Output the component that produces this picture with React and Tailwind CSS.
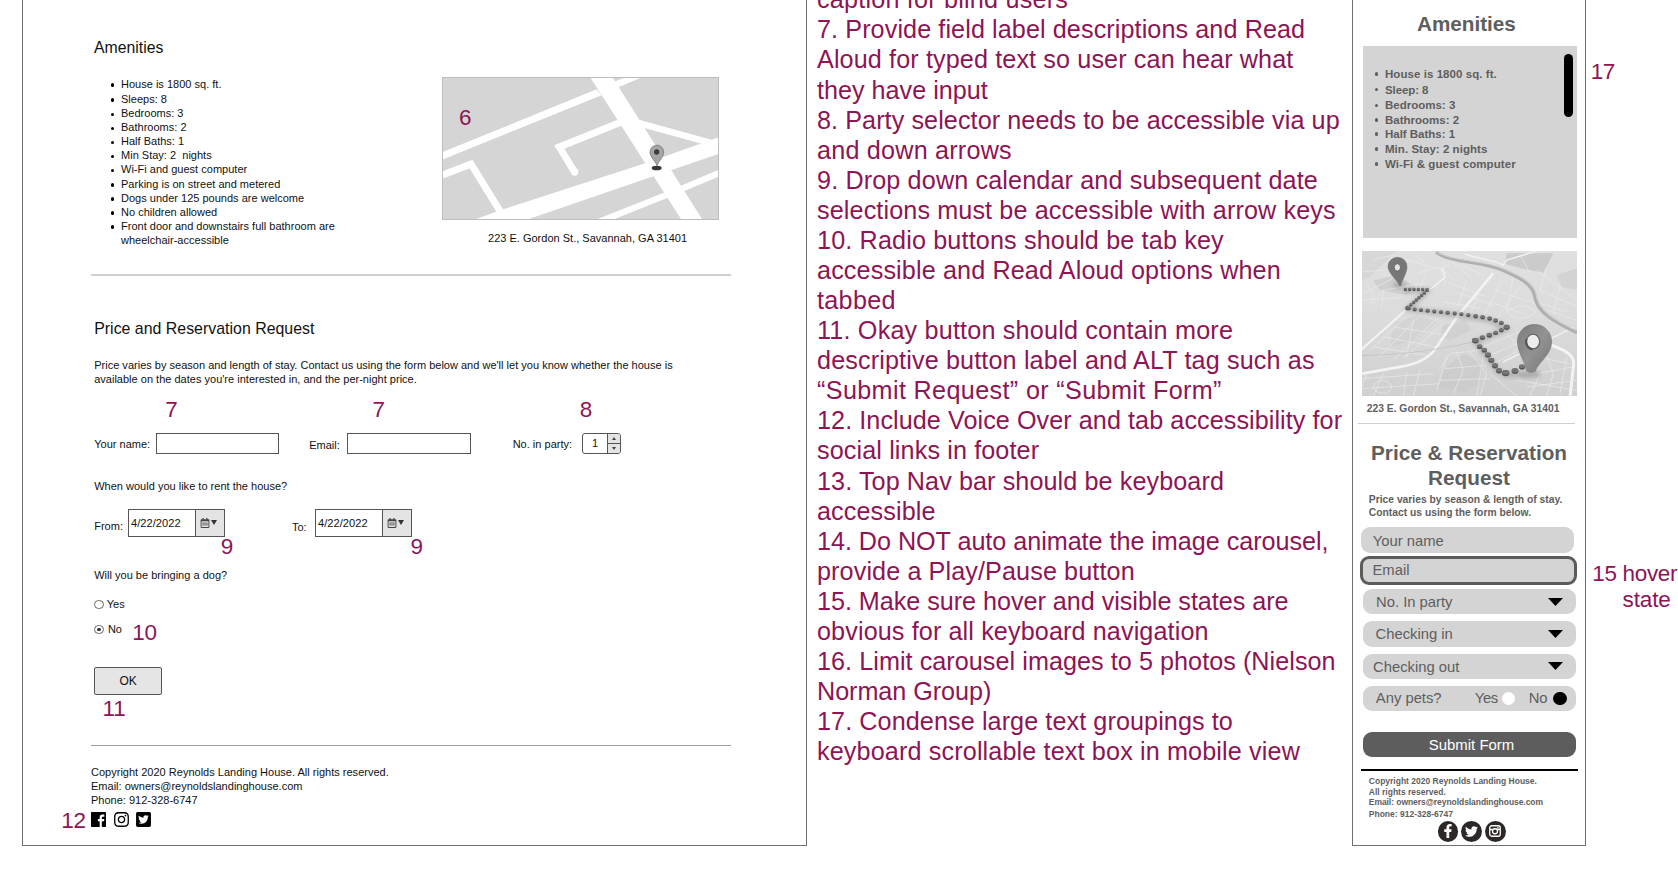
import React from 'react';
import { FaInstagram, FaTwitterSquare, FaRegCalendarAlt, FaFacebookF, FaTwitter } from 'react-icons/fa';

const notes = [
  ['caption for blind users', 'tracking-[0.2px]'],
  ['7. Provide field label descriptions and Read', 'tracking-[0.085px]'],
  ['Aloud for typed text so user can hear what', 'tracking-[0.11px]'],
  ['they have input', 'tracking-[0px]'],
  ['8. Party selector needs to be accessible via up', 'tracking-[0.07px]'],
  ['and down arrows', 'tracking-[0.2px]'],
  ['9. Drop down calendar and subsequent date', 'tracking-[0.128px]'],
  ['selections must be accessible with arrow keys', 'tracking-[0.11px]'],
  ['10. Radio buttons should be tab key', 'tracking-[0.14px]'],
  ['accessible and Read Aloud options when', 'tracking-[0.12px]'],
  ['tabbed', 'tracking-[0.3px]'],
  ['11. Okay button should contain more', 'tracking-[0.18px]'],
  ['descriptive button label and ALT tag such as', 'tracking-[0.13px]'],
  ['“Submit Request” or “Submit Form”', 'tracking-[0.35px]'],
  ['12. Include Voice Over and tab accessibility for', 'tracking-[0.06px]'],
  ['social links in footer', 'tracking-[0.11px]'],
  ['13. Top Nav bar should be keyboard', 'tracking-[0.082px]'],
  ['accessible', 'tracking-[0.1px]'],
  ['14. Do NOT auto animate the image carousel,', 'tracking-[-0.044px]'],
  ['provide a Play/Pause button', 'tracking-[0.1px]'],
  ['15. Make sure hover and visible states are', 'tracking-[-0.04px]'],
  ['obvious for all keyboard navigation', 'tracking-[0.108px]'],
  ['16. Limit carousel images to 5 photos (Nielson', 'tracking-[0.045px]'],
  ['Norman Group)', 'tracking-[-0.057px]'],
  ['17. Condense large text groupings to', 'tracking-[0.08px]'],
  ['keyboard scrollable text box in mobile view', 'tracking-[0.13px]'],
];

const amenities = [
  ['House is 1800 sq. ft.', 'h-[15px]'],
  ['Sleeps: 8', 'h-[14.1px]'],
  ['Bedrooms: 3', 'h-[14.1px]'],
  ['Bathrooms: 2', 'h-[14.1px]'],
  ['Half Baths: 1', 'h-[14.1px]'],
  ['Min Stay: 2 \u00a0nights', 'h-[14.1px]'],
  ['Wi-Fi and guest computer', 'h-[14.1px]'],
  ['Parking is on street and metered', 'h-[14.1px]'],
  ['Dogs under 125 pounds are welcome', 'h-[14.1px]'],
  ['No children allowed', 'h-[14.1px]'],
  ['Front door and downstairs full bathroom are wheelchair-accessible', 'h-[28.2px]'],
];

const mobileAmenities = [
  ['House is 1800 sq. ft.', 'h-[15.7px] tracking-[0.06px]'],
  ['Sleep: 8', 'h-[15.6px] tracking-[-0.1px]'],
  ['Bedrooms: 3', 'h-[14.7px]'],
  ['Bathrooms: 2', 'h-[14px]'],
  ['Half Baths: 1', 'h-[15px] tracking-[-0.02px]'],
  ['Min. Stay: 2 nights', 'h-[15px] tracking-[0.04px]'],
  ['Wi-Fi & guest computer', 'h-[15px] tracking-[0.08px]'],
];

const marks = [
  ['6', 'left-[458.9px] top-[104.9px]'],
  ['7', 'left-[165.2px] top-[397.4px]'],
  ['7', 'left-[372.6px] top-[397.4px]'],
  ['8', 'left-[579.8px] top-[397.4px]'],
  ['9', 'left-[220.7px] top-[534.1px]'],
  ['9', 'left-[410.6px] top-[534.1px]'],
  ['10', 'left-[132.2px] top-[619.8px] tracking-[-0.2px]'],
  ['11', 'left-[102.5px] top-[696.1px] tracking-[-0.2px]'],
  ['12', 'left-[61.3px] top-[807.8px] tracking-[-0.4px]'],
  ['17', 'left-[1590.8px] top-[59.1px] tracking-[-0.5px]'],
  ['15 hover', 'left-[1592.3px] top-[561.1px] tracking-[-0.33px]'],
  ['state', 'left-[1622.5px] top-[586.8px] tracking-[-0.1px]'],
];

function StreetMap() {
  return (
    <svg viewBox="66 81 831 429" preserveAspectRatio="none" className="block h-[143px] w-[277px]">
      <rect x="66" y="81" width="831" height="429" fill="#d5d5d5" />
      <g fill="#fff">
        <polygon points="510,81 577,81 848,510 785,510" />
        <polygon points="160,510 250,478 680,338 875,269 897,262 897,311 755,360 700,379 318,510" />
        <polygon points="66,307 530,118 545,136 66,329" />
        <polygon points="575,98 618,81 668,81 588,115" />
        <polygon points="640,203 660,210 877,270 845,281 665,232" />
      </g>
      <g fill="none" stroke="#fff" strokeWidth="21">
        <path d="M604 216L418 291L463 365" />
        <path d="M66 376L153 342L243 488" />
        <path d="M540 514L742 434M788 415L900 368" strokeWidth="19" />
      </g>
      <circle cx="464" cy="366" r="11" fill="#fff" />
      <rect x="67.5" y="82.5" width="828" height="426" fill="none" stroke="#bdbdbd" strokeWidth="3" />
      <ellipse cx="710" cy="354" rx="15" ry="7" fill="#383838" />
      <path d="M711 347C707 334 690 322 690 306A20 20 0 0 1 731 306C731 322 715 334 711 347Z" fill="#a6a6a6" stroke="#666" strokeWidth="2" />
      <circle cx="710" cy="306" r="8" fill="#3c3c3c" />
    </svg>
  );
}

const dots = [
  [196, 147, 5], [209, 147, 5], [222, 147, 5], [235, 147, 5], [248, 147, 5], [261, 149, 6], [253, 158, 5], [245, 165, 5], [237, 172, 5], [229, 179, 5], [221, 186, 5], [213, 193, 5],
  [204, 202, 8], [224, 207, 6], [243, 209, 6], [263, 211, 6], [283, 213, 6], [303, 215, 6], [323, 217, 6], [344, 219, 6], [364, 221, 6], [385, 224, 6], [407, 227, 7], [428, 230, 7], [449, 234, 7], [467, 240, 7], [484, 247, 7], [500, 260, 9],
  [484, 269, 7], [467, 277, 7], [448, 284, 8], [427, 291, 8], [406, 300, 10], [419, 318, 8], [433, 329, 8], [444, 343, 9], [454, 359, 9], [465, 375, 9], [477, 390, 9], [497, 397, 11], [525, 391, 10], [546, 379, 9], [562, 374, 7],
];

function RouteMap() {
  return (
    <svg viewBox="66 33 645 434" preserveAspectRatio="none" className="block h-[145px] w-[215px]">
      <defs>
        <linearGradient id="ground" x1="0" y1="0" x2="0" y2="1">
          <stop offset="0" stopColor="#e0e0e0" />
          <stop offset="0.5" stopColor="#dbdbdb" />
          <stop offset="1" stopColor="#cfcfcf" />
        </linearGradient>
        <linearGradient id="pin" x1="0" y1="0" x2="1" y2="1">
          <stop offset="0" stopColor="#7c7c7c" />
          <stop offset="0.5" stopColor="#929292" />
          <stop offset="1" stopColor="#777" />
        </linearGradient>
        <filter id="soft" x="-20%" y="-20%" width="140%" height="140%"><feGaussianBlur stdDeviation="6" /></filter>
      </defs>
      <rect x="66" y="33" width="645" height="434" fill="url(#ground)" />
      <g fill="#cbcbcb">
        <polygon points="500,40 640,40 610,98 545,85 495,72" />
        <polygon points="650,105 711,85 711,150 665,140" opacity=".6" />
        <polygon points="100,122 170,105 225,140 200,165 120,150" opacity=".8" />
        <polygon points="310,255 375,238 395,270 330,300 300,290" opacity=".6" />
        <polygon points="310,390 370,340 430,370 420,430 370,455 295,440" opacity=".7" />
        <polygon points="66,33 170,33 90,110 66,120" opacity=".4" />
        <polygon points="160,250 230,225 290,245 230,300 150,320" opacity=".45" />
      </g>
      <g fill="none" stroke="#ebebeb" strokeWidth="2">
        <path d="M70 160L150 120L210 60M90 190L130 150L250 130M100 60L160 45M66 95L150 90M80 130L110 200M130 150L125 205M66 180L190 172" />
        <path d="M230 45C260 70 270 90 240 140M200 60L310 90L340 120M330 60L390 110M360 75L430 105M230 100L330 75M300 85L315 130" />
        <path d="M330 130L440 170M345 155L460 195M310 185L420 205M380 120L350 205M420 145L395 215M480 130L430 230M520 110L500 215M540 140L470 235M460 150L590 190M450 185L560 225" />
        <path d="M90 330L200 230M120 350L240 225M160 360L290 235M190 355L310 250M130 290L290 320M160 260L320 285M100 320L260 345M220 240L200 350" />
        <path d="M300 385L330 340L420 330M290 450L320 350M350 335L370 390L340 460M390 335L440 400L420 467M430 345L410 467M315 385L440 375M300 420L450 415M200 395L190 467M240 390L220 467M130 400L100 467M80 400L66 440M66 415L280 400M66 445L300 430" />
        <path d="M430 320L560 265M450 345L580 290M470 365L540 330M560 270L520 340M500 280L560 350M590 400L700 380M560 440L711 420M590 350L690 370M600 400L570 467M640 400L620 467M680 350L660 460M610 320L640 400M530 420L711 450M450 400L530 467" />
        <path d="M540 45L570 100M590 90L711 180M620 80L600 150L711 200M600 190L680 215M620 210L711 240M660 140L640 215" />
        <ellipse cx="128" cy="440" rx="27" ry="19" /><path d="M500 215C520 195 570 190 585 215C570 240 520 240 500 215" />
      </g>
      <g fill="none" stroke="#f3f3f3" strokeLinecap="round">
        <path d="M60 332L195 212" strokeWidth="6" />
        <path d="M457 103L350 232L285 327C265 355 230 372 180 380L66 400" strokeWidth="8" />
        <path d="M200 205L315 112L308 85" strokeWidth="4" />
        <path d="M635 315C690 335 705 350 700 380L690 470" strokeWidth="9" />
        <path d="M490 365L700 262" strokeWidth="4" />
        <path d="M375 42C410 55 460 60 490 75L500 60L590 33" strokeWidth="4" />
      </g>
      <path d="M66 345C180 345 290 330 400 305" fill="none" stroke="#c2c2c2" strokeWidth="3" />
      <path d="M288 37C340 72 425 62 490 92C535 112 575 130 583 165C588 215 640 245 711 278" fill="none" stroke="#afafaf" strokeWidth="9" />
      <path d="M288 34C340 68 425 58 492 87C540 108 581 127 589 163C594 210 645 240 711 272" fill="none" stroke="#c9c9c9" strokeWidth="3" />
      <g filter="url(#soft)" fill="none" stroke="#8a8a8a" strokeWidth="12" opacity=".6">
        <path d="M196 152H262L204 207L364 226L449 240L500 266L406 306L475 395L500 405L575 398" />
        <ellipse cx="178" cy="134" rx="12" ry="3" /><path d="M540 405L600 402" strokeWidth="16" />
      </g>
      {dots.map(([x, y, r]) => (
        <g key={`${x}-${y}`}>
          <ellipse cx={x} cy={y + 2} rx={r} ry={r * 0.82} fill="#555" />
          <ellipse cx={x} cy={y - 1} rx={r} ry={r * 0.65} fill="#757575" />
        </g>
      ))}
      <path fillRule="evenodd" d="M179 137C173 121 144 100 144 79A28.500 27 0 0 1 201 79C201 101 185 121 182 137ZM171 71A9 11 0 1 0 171.100 93A9 11 0 1 0 171 71Z" fill="#777" stroke="#6a6a6a" strokeWidth="1.500" />
      <ellipse cx="172" cy="82" rx="9.500" ry="11" fill="#e3e3e3" stroke="#5c5c5c" strokeWidth="2.500" />
      <path d="M558 392C555 365 531 338 531 304A52 52 0 0 1 636 304C636 345 596 365 587 394Q573 403 558 392Z" fill="url(#pin)" />
      <ellipse cx="579" cy="304" rx="20" ry="22" fill="#ececec" stroke="#666" strokeWidth="4" />
      <path d="M560 296A20 22 0 0 0 578 327" fill="none" stroke="#555" strokeWidth="6" />
    </svg>
  );
}

function DateField() {
  return (
    <div className="flex h-[28px] w-[97px] border border-[#555] bg-white">
      <span className="w-[66px] pl-[2px] pt-[6.200px] text-[11.100px] leading-[14px] tracking-[0.03px]">4/22/2022</span>
      <span className="flex flex-1 items-center border-l border-[#555] bg-[#e4e4e4] pl-[4px]">
        <FaRegCalendarAlt className="h-[10px] w-[10px] text-[#444]" />
        <svg viewBox="0 0 6 5" className="mb-[1px] ml-[1px] h-[5px] w-[6px]"><path d="M0 0H6L3 5Z" fill="#333" /></svg>
      </span>
    </div>
  );
}

function Radio({ checked }) {
  return (
    <span className="flex h-[9.500px] w-[9.500px] items-center justify-center rounded-full border border-[#666]">
      {checked && <span className="h-[3.800px] w-[3.800px] rounded-full bg-[#333]" />}
    </span>
  );
}

function DesktopPanel() {
  return (
    <section className="ml-[22px] h-[846px] w-[785px] shrink-0 border-x border-b border-[#707070] pl-[68px] text-[11px] leading-[14.100px] tracking-[0.01px] text-[#111]">
      <div className="h-[274px] w-[640px] pt-[37.800px]">
        <h2 className="ml-[3px] text-[15.800px] leading-[20px]">Amenities</h2>
        <div className="mt-[19.200px] flex">
          <ul className="w-[351px] pl-[19.500px]">
            {amenities.map(([text, size]) => (
              <li key={text} className={`flex gap-[7px] ${size}`}>
                <span className="mt-[6.500px] h-[3.500px] w-[3.500px] shrink-0 rounded-full bg-black" />
                <span className="w-[225px]">{text}</span>
              </li>
            ))}
          </ul>
          <figure>
            <StreetMap />
            <figcaption className="ml-[46px] mt-[10.900px]">223 E. Gordon St., Savannah, GA 31401</figcaption>
          </figure>
        </div>
      </div>
      <hr className="h-[2px] w-[640px] border-0 bg-[#d0d0d0]" />
      <form className="h-[469px] w-[640px] pl-[3.200px] pt-[42.800px]">
        <h2 className="text-[15.900px] leading-[20px]">Price and Reservation Request</h2>
        <p className="mt-[19.600px] whitespace-nowrap">
          Price varies by season and length of stay. Contact us using the form below and we'll let you know whether the house is<br />
          available on the dates you're interested in, and the per-night price.
        </p>
        <div className="mt-[46.400px] flex h-[21px]">
          <span className="w-[61.800px] pt-[4.200px] leading-[14px]">Your name:</span>
          <span className="w-[123px] border border-[#555]" />
          <span className="ml-[30.200px] w-[37.800px] pt-[4.700px] leading-[14px]">Email:</span>
          <span className="w-[124px] border border-[#555]" />
          <span className="ml-[41.700px] w-[69.300px] pt-[4.400px] leading-[14px]">No. in party:</span>
          <span className="flex w-[39px] overflow-hidden rounded-[3px] border border-[#555]">
            <span className="w-[24px] pt-[2.500px] text-center leading-[14px]">1</span>
            <span className="flex flex-1 flex-col border-l border-[#555] bg-[#e4e4e4]">
              <span className="flex h-[10px] items-center justify-center border-b border-[#555]"><svg viewBox="0 0 4 3" className="h-[3px] w-[4px]"><path d="M0 3H4L2 0Z" fill="#444" /></svg></span>
              <span className="flex flex-1 items-center justify-center"><svg viewBox="0 0 4 3" className="h-[3px] w-[4px]"><path d="M0 0H4L2 3Z" fill="#444" /></svg></span>
            </span>
          </span>
        </div>
        <p className="mt-[25.400px] leading-[14px]">When would you like to rent the house?</p>
        <div className="mt-[15.600px] flex">
          <span className="w-[33.800px] pt-[10.200px] leading-[14px]">From:</span>
          <DateField />
          <span className="ml-[67px] w-[23px] pt-[10.700px] leading-[14px]">To:</span>
          <DateField />
        </div>
        <p className="mt-[31.200px] leading-[14px]">Will you be bringing a dog?</p>
        <div className="mt-[15.300px] flex h-[14px] items-center gap-[3px] leading-[14px]"><Radio /><span>Yes</span></div>
        <div className="mt-[11px] flex h-[14px] items-center gap-[4.200px] leading-[14px]"><Radio checked /><span>No</span></div>
        <div className="mt-[30.500px] flex h-[28.500px] w-[68px] items-center justify-center rounded-[2px] border border-[#555] bg-[#e5e5e5] text-[12px]">OK</div>
      </form>
      <hr className="h-px w-[640px] border-0 bg-[#a0a0a0]" />
      <footer className="pt-[18.500px]">
        <p>Copyright 2020 Reynolds Landing House. All rights reserved.</p>
        <p>Email: owners@reynoldslandinghouse.com</p>
        <p>Phone: 912-328-6747</p>
        <div className="mt-[5.200px] flex gap-[7.500px] text-black">
          <svg viewBox="3 3 18 18" className="h-[15px] w-[15px]"><path fill="currentColor" d="M4 3H20A1 1 0 0 1 21 4V20A1 1 0 0 1 20 21H4A1 1 0 0 1 3 20V4A1 1 0 0 1 4 3M19 6H17.200A3.600 3.600 0 0 0 13.400 9.600V11.500H11.300V14H13.400V21H16V14H18.600L19 11.500H16V9.800A1.200 1.200 0 0 1 17.200 8.600H19V6Z" /></svg>
          <FaInstagram className="-mx-[1px] -mt-[1px] h-[17px] w-[17px]" />
          <FaTwitterSquare className="-mx-[1px] -mt-[1px] h-[17px] w-[17px]" />
        </div>
      </footer>
    </section>
  );
}

function Caret() {
  return <svg viewBox="0 0 15 8" className="h-[8px] w-[15px]"><path d="M0 0H15L7.500 8Z" /></svg>;
}

const pill = 'flex rounded-[9px] bg-[#d4d4d4] text-[14.800px] leading-[25px]';

function MobilePanel() {
  return (
    <section className="h-[846px] w-[234px] shrink-0 border-x border-b border-[#707070] text-[#5e5e5e]">
      <h2 className="pl-[64px] pt-[12.100px] text-[20.700px] font-bold leading-[24px]">Amenities</h2>
      <div className="ml-[10px] mt-[9.900px] flex h-[192px] w-[214px] justify-between bg-[#d4d4d4] pr-[4px]">
        <ul className="pl-[11.500px] pt-[21px] text-[11.500px] font-bold leading-[14px]">
          {mobileAmenities.map(([text, size]) => (
            <li key={text} className={`flex gap-[7px] whitespace-nowrap ${size}`}>
              <span className="mt-[5.300px] h-[3.500px] w-[3.500px] shrink-0 rounded-full bg-[#5e5e5e]" />
              <span>{text}</span>
            </li>
          ))}
        </ul>
        <span className="mt-[8px] h-[63px] w-[9px] rounded-full bg-black" />
      </div>
      <div className="ml-[9px] mt-[13px]"><RouteMap /></div>
      <p className="ml-[13.700px] mt-[6px] text-[10.320px] font-bold leading-[14px]">223 E. Gordon St., Savannah, GA 31401</p>
      <hr className="ml-[5px] mt-[6.700px] h-[1.500px] w-[217px] border-0 bg-[#cfcfcf]" />
      <h2 className="mt-[17px] text-center text-[20.750px] font-bold leading-[24.700px]">Price &amp; Reservation<br />Request</h2>
      <p className="ml-[15.800px] mt-[2.400px] whitespace-nowrap text-[10.320px] font-bold leading-[13px]">Price varies by season &amp; length of stay.<br />Contact us using the form below.</p>
      <div className={`${pill} ml-[8px] mt-[8px] h-[26px] w-[213px] pl-[11.700px] pt-[1.600px]`}>Your name</div>
      <div className={`${pill} ml-[6.500px] mt-[3px] h-[29px] w-[217px] items-center border-[3.500px] border-[#5b5b5b] pl-[10px] pt-[1px]`}>Email</div>
      <div className={`${pill} ml-[10px] mt-[4px] h-[25.300px] w-[213px] items-center justify-between pl-[13px] pr-[13.500px]`}><span className="pt-[1px]">No. In party</span><Caret /></div>
      <div className={`${pill} ml-[10px] mt-[6.700px] h-[25.700px] w-[213px] items-center justify-between pl-[12.500px] pr-[13.500px]`}><span className="pt-[0.800px]">Checking in</span><Caret /></div>
      <div className={`${pill} ml-[10px] mt-[7px] h-[25.600px] w-[213px] items-center justify-between pl-[10px] pr-[13.500px]`}><span className="pt-[1.600px]">Checking out</span><Caret /></div>
      <div className={`${pill} ml-[10px] mt-[6.700px] h-[25px] w-[213px] items-center pl-[12.800px]`}>
        <span className="w-[99px]">Any pets?</span>
        <span className="w-[27.200px] tracking-[-0.4px]">Yes</span>
        <span className="h-[13.400px] w-[13.400px] rounded-full bg-white" />
        <span className="ml-[13.300px] w-[24.800px]">No</span>
        <span className="h-[13.400px] w-[13.400px] rounded-full bg-black" />
      </div>
      <div className="ml-[10px] mt-[21px] h-[25px] w-[213px] rounded-[9px] bg-[#5d5d5d] pl-[4px] text-center text-[14.950px] leading-[25px] text-white">Submit Form</div>
      <hr className="ml-[8px] mt-[12.400px] h-[2px] w-[217px] border-0 bg-black" />
      <div className="ml-[15.800px] mt-[5.100px] text-[8.500px] font-bold leading-[10.300px]">
        <p>Copyright 2020 Reynolds Landing House.</p>
        <p>All rights reserved.</p>
        <p className="tracking-[-0.06px]">Email: owners@reynoldslandinghouse.com</p>
        <div className="mt-[4px] h-[7.500px] overflow-hidden"><p className="-mt-[2.600px]">Phone: 912-328-6747</p></div>
      </div>
      <div className="ml-[84.500px] mt-[2.200px] flex gap-[3px] text-white">
        <span className="flex h-[20.800px] w-[20.800px] items-center justify-center rounded-full bg-[#2e2727]"><FaFacebookF className="h-[14px] w-[14px]" /></span>
        <span className="flex h-[20.800px] w-[20.800px] items-center justify-center rounded-full bg-[#2e2727]"><FaTwitter className="h-[13px] w-[13px]" /></span>
        <span className="flex h-[20.800px] w-[20.800px] items-center justify-center rounded-full bg-[#2e2727]">
          <svg viewBox="0 0 24 24" className="h-[12px] w-[12px]" fill="none" stroke="#fff" strokeWidth="2.600"><rect x="1.500" y="1.500" width="21" height="21" rx="4" /><path d="M2 9H7M17 9H22" /><circle cx="12" cy="12.500" r="5" /><path d="M16.500 5.500H19" strokeWidth="3.500" /></svg>
        </span>
      </div>
    </section>
  );
}

export default function App() {
  return (
    <main className="relative flex h-[888px] w-[1678px] overflow-hidden bg-white font-['Liberation_Sans',Arial,sans-serif]">
      <DesktopPanel />
      <div className="-mt-[15.700px] w-[545px] shrink-0 whitespace-nowrap pl-[10px] text-[25.200px] leading-[30.080px] text-[#8e1454]">
        {notes.map(([text, spacing], i) => <p key={i} className={spacing}>{text}</p>)}
      </div>
      <MobilePanel />
      {marks.map(([text, place], i) => (
        <span key={i} className={`absolute whitespace-nowrap text-[22.500px] leading-[25px] text-[#8e1454] ${place}`}>{text}</span>
      ))}
    </main>
  );
}
